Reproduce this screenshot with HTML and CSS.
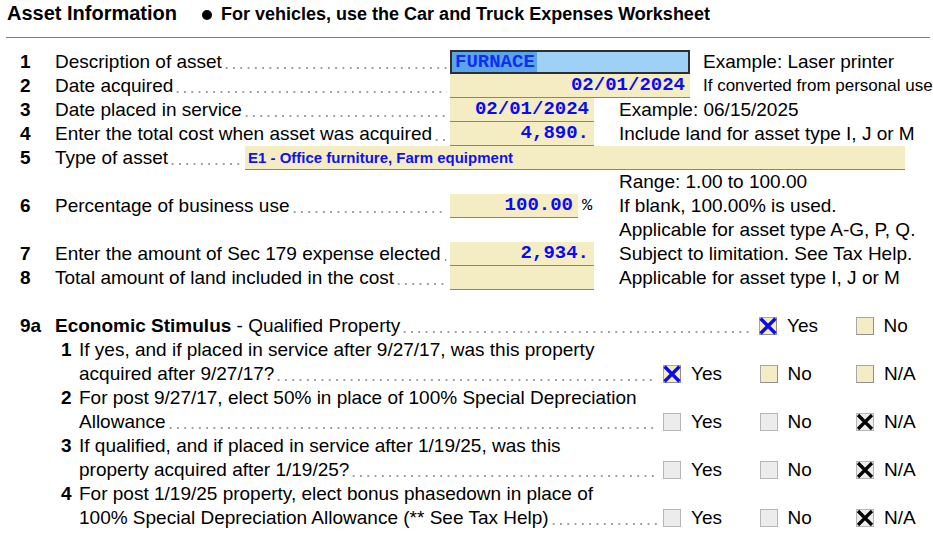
FILE: index.html
```html
<!DOCTYPE html>
<html lang="en">
<head>
<meta charset="utf-8">
<title>Asset Information</title>
<link rel="stylesheet" href="styles.css">
</head>
<body>
<div class="page">
  <header class="hdr">
    <h1 class="title">Asset Information</h1>
    <span class="bullet"></span>
    <span class="hdr-note">For vehicles, use the Car and Truck Expenses Worksheet</span>
  </header>

  <section class="rows">
    <div class="row">
      <span class="num">1</span>
      <span class="label"><span>Description of asset</span><span class="lead"></span></span>
      <span class="field wide focus"><span class="sel">FURNACE</span></span>
      <span class="note w">Example: Laser printer</span>
    </div>
    <div class="row">
      <span class="num">2</span>
      <span class="label"><span>Date acquired</span><span class="lead"></span></span>
      <span class="field wide">02/01/2024</span>
      <span class="note w small">If converted from personal use</span>
    </div>
    <div class="row">
      <span class="num">3</span>
      <span class="label"><span>Date placed in service</span><span class="lead"></span></span>
      <span class="field narrow">02/01/2024</span>
      <span class="note">Example: 06/15/2025</span>
    </div>
    <div class="row">
      <span class="num">4</span>
      <span class="label"><span>Enter the total cost when asset was acquired</span><span class="lead"></span></span>
      <span class="field narrow">4,890.</span>
      <span class="note">Include land for asset type I, J or M</span>
    </div>
    <div class="row">
      <span class="num">5</span>
      <span class="label short"><span>Type of asset</span><span class="lead"></span></span>
      <span class="field type">E1 - Office furniture, Farm equipment</span>
    </div>
    <div class="row">
      <span class="num"></span>
      <span class="label"></span>
      <span class="field narrow blank"></span>
      <span class="note">Range: 1.00 to 100.00</span>
    </div>
    <div class="row">
      <span class="num">6</span>
      <span class="label"><span>Percentage of business use</span><span class="lead"></span></span>
      <span class="field pct">100.00</span>
      <span class="pct-sign">%</span>
      <span class="note">If blank, 100.00% is used.</span>
    </div>
    <div class="row">
      <span class="num"></span>
      <span class="label"></span>
      <span class="field narrow blank"></span>
      <span class="note">Applicable for asset type A-G, P, Q.</span>
    </div>
    <div class="row">
      <span class="num">7</span>
      <span class="label"><span>Enter the amount of Sec 179 expense elected</span><span class="lead"></span></span>
      <span class="field narrow">2,934.</span>
      <span class="note">Subject to limitation. See Tax Help.</span>
    </div>
    <div class="row">
      <span class="num">8</span>
      <span class="label"><span>Total amount of land included in the cost</span><span class="lead"></span></span>
      <span class="field narrow"></span>
      <span class="note">Applicable for asset type I, J or M</span>
    </div>
  </section>

  <section class="stim">
    <div class="row">
      <span class="num">9a</span>
      <span class="label qlabel"><span><b>Economic Stimulus</b> - Qualified Property</span><span class="lead"></span></span>
      <div class="opts">
        <span class="opt"><span class="cb on"><svg viewBox="0 0 18 18" width="18" height="18"><path d="M1.5 1.5L16.5 16.5M16.5 1.5L1.5 16.5" class="xb"/></svg></span>Yes</span>
        <span class="opt"><span class="cb"></span>No</span>
      </div>
    </div>

    <div class="q">
      <span class="qnum">1</span>
      <div class="qbody">
        <div class="qline">If yes, and if placed in service after 9/27/17, was this property</div>
        <div class="qline">
          <span class="qtext"><span>acquired after 9/27/17?</span><span class="lead"></span></span>
          <div class="opts">
            <span class="opt"><span class="cb on"><svg viewBox="0 0 18 18" width="18" height="18"><path d="M1.5 1.5L16.5 16.5M16.5 1.5L1.5 16.5" class="xb"/></svg></span>Yes</span>
            <span class="opt"><span class="cb"></span>No</span>
            <span class="opt"><span class="cb"></span>N/A</span>
          </div>
        </div>
      </div>
    </div>

    <div class="q">
      <span class="qnum">2</span>
      <div class="qbody">
        <div class="qline">For post 9/27/17, elect 50% in place of 100% Special Depreciation</div>
        <div class="qline">
          <span class="qtext"><span>Allowance</span><span class="lead"></span></span>
          <div class="opts">
            <span class="opt"><span class="cb dis"></span>Yes</span>
            <span class="opt"><span class="cb dis"></span>No</span>
            <span class="opt"><span class="cb dis"><svg viewBox="0 0 18 18" width="18" height="18"><path d="M2 2L16 16M16 2L2 16" class="xk"/></svg></span>N/A</span>
          </div>
        </div>
      </div>
    </div>

    <div class="q">
      <span class="qnum">3</span>
      <div class="qbody">
        <div class="qline">If qualified, and if placed in service after 1/19/25, was this</div>
        <div class="qline">
          <span class="qtext"><span>property acquired after 1/19/25?</span><span class="lead"></span></span>
          <div class="opts">
            <span class="opt"><span class="cb dis"></span>Yes</span>
            <span class="opt"><span class="cb dis"></span>No</span>
            <span class="opt"><span class="cb dis"><svg viewBox="0 0 18 18" width="18" height="18"><path d="M2 2L16 16M16 2L2 16" class="xk"/></svg></span>N/A</span>
          </div>
        </div>
      </div>
    </div>

    <div class="q">
      <span class="qnum">4</span>
      <div class="qbody">
        <div class="qline">For post 1/19/25 property, elect bonus phasedown in place of</div>
        <div class="qline">
          <span class="qtext"><span>100% Special Depreciation Allowance (** See Tax Help)</span><span class="lead"></span></span>
          <div class="opts">
            <span class="opt"><span class="cb dis"></span>Yes</span>
            <span class="opt"><span class="cb dis"></span>No</span>
            <span class="opt"><span class="cb dis"><svg viewBox="0 0 18 18" width="18" height="18"><path d="M2 2L16 16M16 2L2 16" class="xk"/></svg></span>N/A</span>
          </div>
        </div>
      </div>
    </div>
  </section>
</div>
</body>
</html>
```

FILE: styles.css
```css
html, body {
  margin: 0;
  padding: 0;
  background: #ffffff;
}

body {
  font-family: "Liberation Sans", Arial, sans-serif;
  color: #000000;
  font-size: 19px;
}

.page {
  width: 933px;
}

/* header */
.hdr {
  display: flex;
  align-items: baseline;
  margin: 0 3px 0 6px;
  padding: 0 0 10px 1px;
  border-bottom: 1px solid #7d7d7d;
}

.title {
  margin: 0;
  font-size: 20px;
  font-weight: bold;
  line-height: 26px;
}

.bullet {
  display: inline-block;
  width: 10px;
  height: 10px;
  border-radius: 50%;
  background: #000;
  margin: 0 9px 0 25px;
}

.hdr-note {
  font-size: 18px;
  font-weight: bold;
  line-height: 26px;
}

/* rows */
.rows {
  margin-top: 12px;
  padding-left: 20px;
}

.stim {
  margin-top: 24px;
  padding-left: 20px;
}

.row {
  display: flex;
  align-items: stretch;
  height: 24px;
  line-height: 24px;
}

.num {
  flex: none;
  width: 35px;
  font-weight: bold;
}

.label {
  flex: none;
  display: flex;
  width: 395px;
  padding-right: 3px;
  box-sizing: border-box;
  white-space: nowrap;
}

.label.short {
  width: 190px;
  padding-right: 4px;
}

.label.qlabel {
  width: 704px;
  padding-right: 5px;
}

.lead {
  flex: 1;
  margin-left: 1px;
  background-image: radial-gradient(circle at 50% 50%, #8c8c8c 0, #8c8c8c 0.6px, rgba(140, 140, 140, 0) 1.1px);
  background-size: 7.3px 2px;
  background-position: 0 17px;
  background-repeat: repeat-x;
}

/* fields */
.field {
  flex: none;
  display: block;
  height: 24px;
  box-sizing: border-box;
  background: #f4edc4;
  border-bottom: 1px solid #858585;
  font-family: "Liberation Mono", "Courier New", monospace;
  font-weight: bold;
  font-size: 19px;
  line-height: 23px;
  color: #0a0af5;
  text-align: right;
  padding: 0 5px;
  white-space: nowrap;
  overflow: hidden;
}

.field.wide { width: 240px; }
.field.narrow { width: 144px; }
.field.pct { width: 128px; }

.field.type {
  width: 660px;
  font-family: "Liberation Sans", Arial, sans-serif;
  font-size: 15px;
  text-align: left;
  padding-left: 3px;
  color: #1010f0;
}

.field.focus {
  background: #9fd1f7;
  border: 2px solid #2e2e2e;
  text-align: left;
  padding: 0;
  line-height: 20px;
}

.sel {
  display: inline-block;
  height: 20px;
  padding: 0 2px 0 3px;
  background: #5ba4e8;
  color: #1030f0;
}

.field.blank {
  background: none;
  border: none;
}

.pct-sign {
  flex: none;
  width: 41px;
  padding-left: 4px;
  box-sizing: border-box;
  font-family: "Liberation Mono", "Courier New", monospace;
  font-size: 17px;
}

.note {
  flex: none;
  margin-left: 25px;
  white-space: nowrap;
}

.note.w { margin-left: 13px; }
.pct-sign + .note { margin-left: 0; }

.note.small {
  font-size: 17px;
}

/* stimulus questions */
.q {
  display: flex;
  margin-left: 35px;
}

.qnum {
  flex: none;
  width: 24px;
  padding-left: 6px;
  box-sizing: border-box;
  font-weight: bold;
  line-height: 24px;
}

.qbody {
  flex: none;
  width: 834px;
}

.qline {
  display: flex;
  height: 24px;
  line-height: 24px;
  white-space: nowrap;
}

.qtext {
  flex: none;
  display: flex;
  width: 584px;
  padding-right: 6px;
  box-sizing: border-box;
}

.opts {
  display: flex;
  align-items: center;
}

.opt {
  display: flex;
  align-items: center;
  gap: 10px;
  width: 96.5px;
}

.opt:last-child {
  width: auto;
}

.cb {
  flex: none;
  position: relative;
  width: 18px;
  height: 18px;
  box-sizing: border-box;
  border: 1px solid #a8a8a8;
  border-right-color: #8e8e8e;
  border-bottom-color: #8e8e8e;
  background: #f4edc4;
}

.cb.dis {
  background: #ececec;
  border-color: #b6b6b6;
}

.cb svg {
  position: absolute;
  left: -1px;
  top: -1px;
  display: block;
}

.xb {
  stroke: #0b0bf0;
  stroke-width: 3.4;
  fill: none;
}

.xk {
  stroke: #000;
  stroke-width: 3.2;
  fill: none;
}
```
